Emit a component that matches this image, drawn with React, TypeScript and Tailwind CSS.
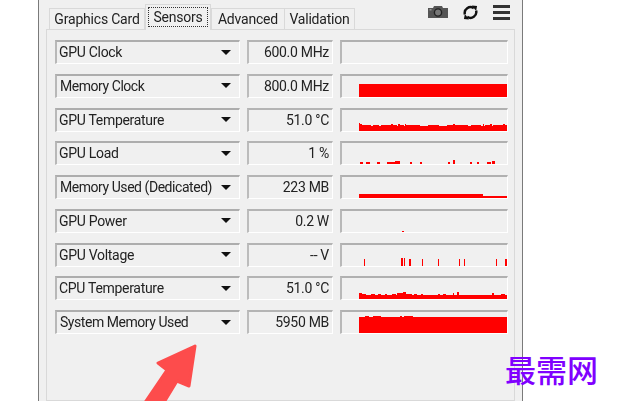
const font = { fontFamily: '"Roboto", "Noto Sans", sans-serif' }

// [top of the red area, x offset, width] runs, measured inside a 167x24 graph box
type Run = [number, number, number]

const bumps = (base: number, tops: [number, number, number][]): Run[] => {
  const runs: Run[] = [[base, 19, 148]]
  tops.forEach((t) => runs.push(t))
  return runs
}

const sensors: { name: string; value: string; runs: Run[]; tight?: boolean }[] = [
  { name: "GPU Clock", value: "600.0 MHz", runs: [] },
  { name: "Memory Clock", value: "800.0 MHz", tight: true, runs: [[10, 19, 148]] },
  {
    name: "GPU Temperature",
    value: "51.0 °C",
    runs: bumps(18, [
      [15, 19, 1], [16, 20, 2], [17, 22, 9], [17, 33, 6], [17, 41, 10], [16, 51, 2], [17, 53, 4], [16, 58, 2],
      [17, 60, 4], [16, 65, 1], [17, 66, 14], [17, 88, 11], [17, 107, 9], [16, 113, 2], [17, 116, 12], [17, 131, 10],
      [16, 143, 1], [17, 145, 5], [16, 150, 2], [17, 153, 10], [16, 163, 2], [17, 165, 2],
    ]),
  },
  {
    name: "GPU Load",
    value: "1 %",
    runs: [
      [21, 20, 3], [21, 26, 4], [21, 37, 3], [21, 47, 8], [20, 55, 3], [20, 58, 2], [21, 70, 2], [21, 80, 2], [21, 108, 2],
      [19, 113, 2], [21, 130, 2], [21, 137, 2], [21, 147, 4], [20, 152, 3],
    ],
  },
  { name: "Memory Used (Dedicated)", value: "223 MB", tight: true, runs: [[19, 19, 124], [21, 143, 24]] },
  { name: "GPU Power", value: "0.2 W", runs: [[22, 62, 2]] },
  {
    name: "GPU Voltage",
    value: "-- V",
    runs: [[16, 24, 1], [15, 61, 2], [15, 64, 1], [16, 69, 2], [16, 82, 1], [16, 98, 1], [16, 119, 1], [16, 124, 1], [16, 156, 1], [16, 165, 2]],
  },
  {
    name: "CPU Temperature",
    value: "51.0 °C",
    runs: bumps(19, [
      [17, 19, 3], [18, 22, 4], [18, 31, 4], [18, 38, 3], [18, 45, 2], [18, 52, 4], [17, 57, 6], [16, 63, 3],
      [18, 66, 6], [18, 74, 3], [18, 81, 2], [18, 98, 2], [18, 103, 3], [17, 113, 1], [16, 117, 2], [17, 152, 2], [18, 161, 4],
    ]),
  },
  {
    name: "System Memory Used",
    value: "5950 MB",
    tight: true,
    runs: bumps(7, [[6, 25, 4], [6, 33, 8], [6, 60, 2], [6, 64, 9]]),
  },
]

function Graph({ runs }: { runs: Run[] }) {
  return (
    <div className="flex-1 h-6 border-t-2 border-l-2 border-t-[#b0b0b0] border-l-[#b8b8b8] border-b border-r border-b-white border-r-white">
      <svg width="165" height="21" viewBox="2 2 165 21" className="block">
        {runs.map((r, i) => (
          <rect key={i} x={r[1]} y={r[0]} width={r[2]} height={23 - r[0]} fill="#ff0000" />
        ))}
      </svg>
    </div>
  )
}

function SensorRow({ name, value, runs, tight }: { name: string; value: string; runs: Run[]; tight?: boolean }) {
  return (
    <div className="flex gap-[7px] h-6 text-[14px] leading-[20px] tracking-[-0.3px] text-[#222]">
      <div className="w-[185px] h-6 flex items-center justify-between pr-[8px] pl-[2px] pb-[1px] border-t-2 border-l-2 border-t-[#adadad] border-l-[#b8b8b8] border-b border-r border-b-white border-r-white">
        <span className={"whitespace-nowrap " + (tight ? "pl-[1px] tracking-[-0.45px]" : "")}>{name}</span>
        <span className="w-0 h-0 border-x-[5px] border-x-transparent border-t-[5px] border-t-[#111] shrink-0" />
      </div>
      <div className="w-[86px] h-6 flex items-center justify-end pr-[3px] pb-[1px] border-t-2 border-l-2 border-t-[#b4b4b4] border-l-[#bcbcbc] border-b border-r border-b-white border-r-white">
        {value}
      </div>
      <Graph runs={runs} />
    </div>
  )
}

function Tab({ label, active, className }: { label: string; active?: boolean; className: string }) {
  if (active) {
    return (
      <div className={"h-[26px] bg-[#f0f0f0] border border-b-0 border-[#d9d9d9] px-[2px] pt-[2px] relative z-10 -mb-px " + className}>
        <div className="border border-dotted border-[#333] h-[20px] flex items-center justify-center text-[14px] tracking-[-0.2px] text-[#222]">
          {label}
        </div>
      </div>
    )
  }
  return (
    <div className={"h-[21px] bg-[#f0f0f0] border border-b-0 border-[#d9d9d9] flex items-center justify-center text-[14px] tracking-[-0.2px] text-[#222] " + className}>
      {label}
    </div>
  )
}

export default function App() {
  return (
    <div className="relative w-[617px] h-[401px] overflow-hidden bg-white" style={font}>
      <div className="ml-[38px] w-[485px] h-[401px] bg-[#f0f0f0] border-x border-x-[#7a7a7a] pl-[7px] pr-[7px] blur-[0.35px]">
        <div className="flex items-end justify-between pt-[4px] h-[29px]">
          <div className="flex items-end pl-[3px]">
            <Tab label="Graphics Card" className="w-[96px]" />
            <Tab label="Sensors" active className="w-[66px]" />
            <Tab label="Advanced" className="w-[74px]" />
            <Tab label="Validation" className="w-[70px] border-l-0" />
          </div>
          <div className="flex items-start gap-[14px] self-start pr-[5px]">
            <svg width="20" height="12" viewBox="0 0 20 12" className="mt-[2px]">
              <path d="M0 2h5l1-2h8l1 2h5v10H0z" fill="#555" />
              <circle cx="10" cy="6.5" r="3.6" fill="#777" stroke="#222" strokeWidth="1.4" />
              <rect x="1.5" y="3" width="2" height="1.5" fill="#999" />
            </svg>
            <svg width="17" height="15" viewBox="0 0 18 16" fill="none" stroke="#111" strokeWidth="2.6" className="mt-[1px]">
              <path d="M3 10a6.2 6.2 0 0 1 9.5-6.6" />
              <path d="M15 6a6.2 6.2 0 0 1-9.5 6.6" />
              <path d="M10.5 0.5l5.5 0.5-1 5.5z" fill="#111" stroke="none" />
              <path d="M7.5 15.5L2 15l1-5.5z" fill="#111" stroke="none" />
            </svg>
            <div className="w-[17px] flex flex-col gap-[3.5px] pt-[1px]">
              <div className="h-[2.5px] bg-[#333]" />
              <div className="h-[2.5px] bg-[#333]" />
              <div className="h-[2.5px] bg-[#333]" />
            </div>
          </div>
        </div>
        <div className="h-[372px] border border-[#d9d9d9] bg-[#f0f0f0] pl-[8px] pr-[6px] pt-[10px] flex flex-col gap-[9.75px]">
          {sensors.map((s) => (
            <SensorRow key={s.name} name={s.name} value={s.value} runs={s.runs} tight={s.tight} />
          ))}
        </div>
      </div>

      {/* red arrow pasted on top of the screenshot */}
      <svg className="absolute left-[140px] top-[340px]" width="60" height="61" viewBox="140 340 60 61">
        <path
          d="M195 346L158 363L167 370L144 404L163 404L177 381L189 386Z"
          fill="#fd4c4c"
          stroke="#fd4c4c"
          strokeWidth="3"
          strokeLinejoin="round"
        />
      </svg>

      {/* site watermark */}
      <div
        className="absolute left-[505px] top-[349px] text-[31px] leading-[40px] font-medium text-[#8000ff] whitespace-nowrap"
        style={{ fontFamily: '"Noto Sans CJK SC", "Noto Sans CJK JP", sans-serif' }}
      >
        最需网
      </div>
    </div>
  )
}
